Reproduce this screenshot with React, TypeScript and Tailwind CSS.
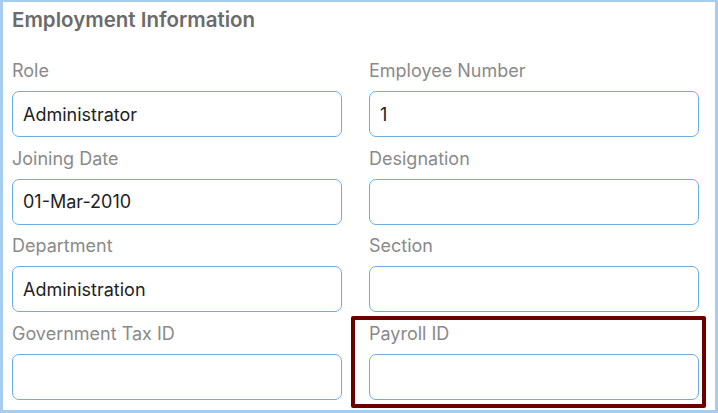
const fields = [
  { label: "Role", value: "Administrator" },
  { label: "Employee Number", value: "1" },
  { label: "Joining Date", value: "01-Mar-2010" },
  { label: "Designation", value: "" },
  { label: "Department", value: "Administration" },
  { label: "Section", value: "" },
  { label: "Government Tax ID", value: "" },
  { label: "Payroll ID", value: "", highlight: true },
];

export default function App() {
  return (
    <div className="h-[413px] w-[718px] bg-white font-['Inter','Noto_Sans',sans-serif]">
      <section className="h-full w-full border-[3px] border-t-2 border-[#a6cdee] pl-[9px] pr-[16px] pt-[6px]">
        <h2 className="text-[20.5px] font-semibold leading-[24px] text-[#6b6b6b]">
          Employment Information
        </h2>

        <div className="mt-[29px] grid grid-cols-[330px_330px] gap-x-[27px] gap-y-[11.5px]">
          {fields.map((field) => (
            <div key={field.label} className="relative">
              {field.highlight && (
                <div className="pointer-events-none absolute -left-[18px] -right-[7px] -top-[8px] -bottom-[8px] rounded-[2px] border-4 border-[#6b0000]" />
              )}
              <label className="block h-[20px] text-[18px] leading-[20px] text-[#8a8a8a]">
                {field.label}
              </label>
              <div className="mt-[10px] flex h-[46px] items-center rounded-[7px] border border-[#6aaee2] px-[10px] text-[18px] text-[#222]">
                {field.value}
              </div>
            </div>
          ))}
        </div>
      </section>
    </div>
  );
}
